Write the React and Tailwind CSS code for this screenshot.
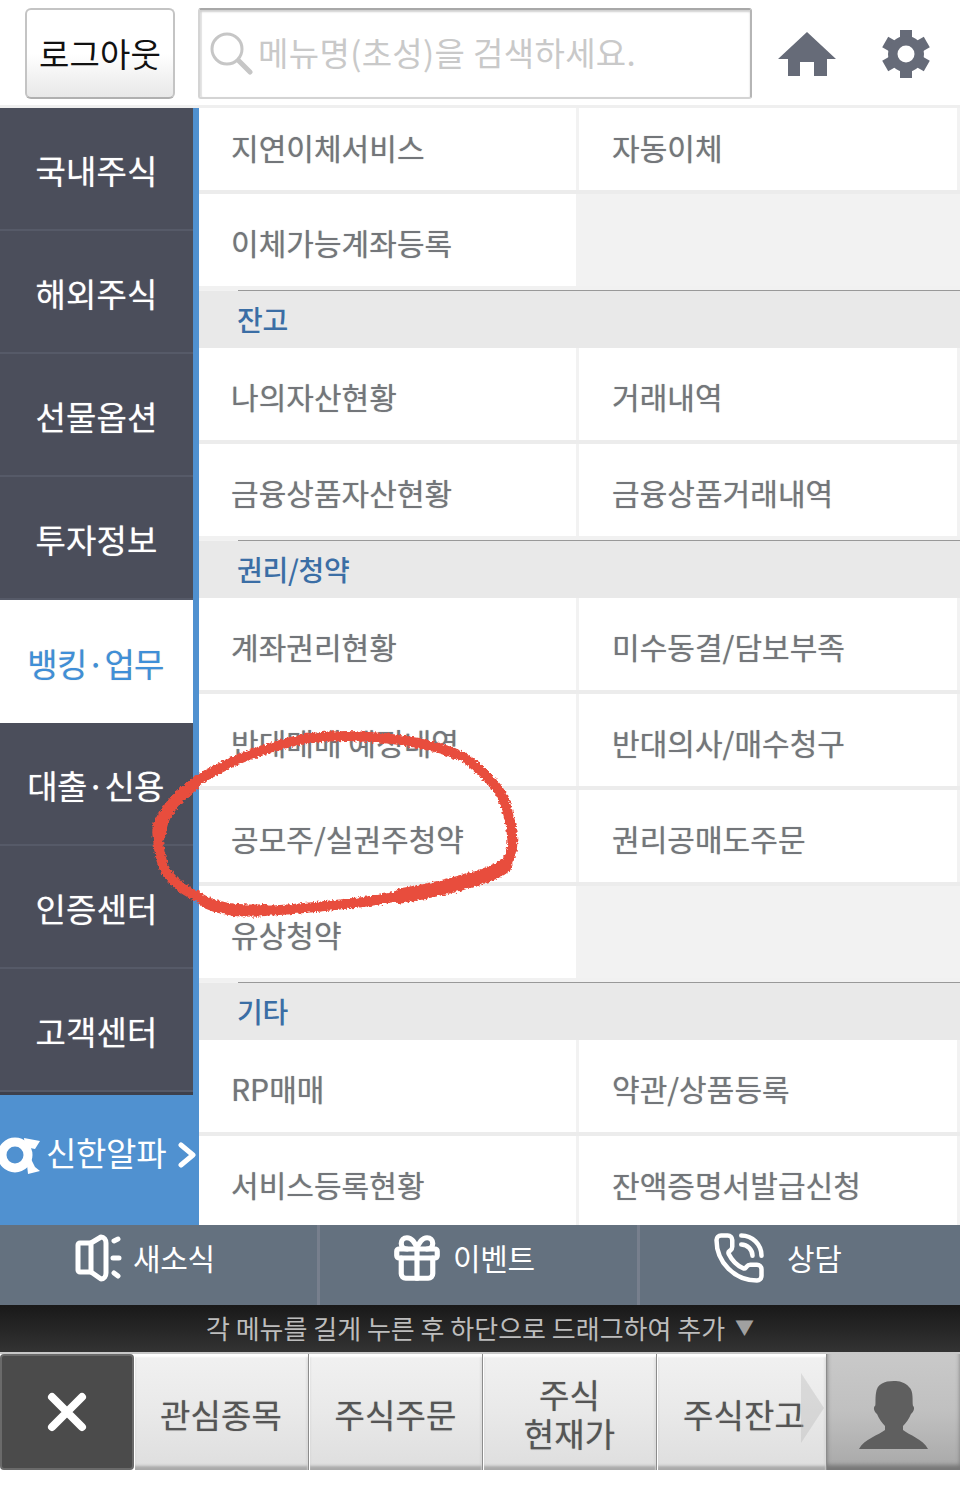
import React from "react";
import { Gift, PhoneCall } from "lucide-react";

const nav = ["국내주식", "해외주식", "선물옵션", "투자정보", "뱅킹·업무", "대출·신용", "인증센터", "고객센터"];

const blocks = [
  { a: "지연이체서비스", b: "자동이체", first: true },
  { a: "이체가능계좌등록" },
  { s: "잔고" },
  { a: "나의자산현황", b: "거래내역" },
  { a: "금융상품자산현황", b: "금융상품거래내역" },
  { s: "권리/청약" },
  { a: "계좌권리현황", b: "미수동결/담보부족" },
  { a: "반대매매 예정내역", b: "반대의사/매수청구" },
  { a: "공모주/실권주청약", b: "권리공매도주문" },
  { a: "유상청약" },
  { s: "기타" },
  { a: "RP매매", b: "약관/상품등록" },
  { a: "서비스등록현황", b: "잔액증명서발급신청" },
];

function Cell({ text, first, second }) {
  return (
    <div className={`flex items-center bg-white text-[30px] leading-[40px] tracking-[0.05px] text-[#73767a] [text-shadow:0_0_1px_#a0a0a0] whitespace-nowrap ${second ? "pl-[33px]" : "pl-[32px]"} ${first ? "h-[82px] pb-[4px]" : "h-[92px] pt-[4px]"}`}>
      {text}
    </div>
  );
}

function Block({ item }) {
  if (item.s) {
    return (
      <div className="shrink-0 flex flex-col">
        <div className="h-[4px] bg-[#f1f1f1]" />
        <div className="h-px ml-[39px] bg-[#999999]" />
        <div className="h-[57px] bg-[#e9e9e9] flex items-center pl-[38px] pb-[2px] text-[28px] leading-[36px] font-medium tracking-[-0.3px] text-[#3b6ea5]">
          {item.s}
        </div>
      </div>
    );
  }
  return (
    <div className="shrink-0 grid grid-cols-[377px_378px] gap-x-[3px] border-b-[4px] border-[#ececec] [&:has(+div.flex)]:border-b-0">
      <Cell text={item.a} first={item.first} />
      {item.b ? <Cell text={item.b} first={item.first} second /> : <div className="bg-[#f2f2f2]" />}
    </div>
  );
}

function Gear() {
  return (
    <svg width="48" height="48" viewBox="-24 -24 48 48" fill="#666b78">
      {[0, 60, 120, 180, 240, 300].map((r) => (
        <rect key={r} x="-6" y="-24" width="12" height="12" transform={`rotate(${r})`} />
      ))}
      <circle r="18" />
      <circle r="8.5" fill="#ffffff" />
    </svg>
  );
}

function Home() {
  return (
    <svg width="58" height="44" viewBox="0 0 58 44" fill="#666b78">
      <path d="M29 0L58 27H49V44H36V30H22V44H10V27H0Z" />
    </svg>
  );
}

function Speaker() {
  return (
    <svg width="47" height="48" viewBox="0 0 47 48" fill="none" stroke="#ffffff" strokeWidth="5" strokeLinecap="round" strokeLinejoin="round">
      <path d="M16 9H5a2 2 0 0 0-2 2v25a2 2 0 0 0 2 2h11" />
      <path d="M16 9L26 3c3 0 5 3 5 6v30c0 3-2 6-5 6L16 38Z" />
      <path d="M39 7l4-2M38 24h6M39 39l4 3" />
    </svg>
  );
}

function Logo() {
  return (
    <svg width="40" height="40" viewBox="0 0 40 40" className="shrink-0">
      <path d="M24 3L40 6L35 14V32L40 36L28 39Z" fill="#ffffff" />
      <path d="M25 12L35 14V32Z" fill="#5091d0" />
      <circle cx="15" cy="20" r="13" fill="none" stroke="#ffffff" strokeWidth="9" />
    </svg>
  );
}

function Person() {
  return (
    <svg width="70" height="68" viewBox="0 0 70 68" fill="#5f5f5f">
      <path d="M35 0C25 0 18 3 17 12C16 18 17 24 16 25C14 26 15 31 18 33C20 38 23 42 26 45V49C20 54 5 58 0 68H69C64 58 50 54 44 49V45C47 42 50 38 52 33C55 31 56 26 54 25C53 20 55 10 50 6C46 1 40 0 35 0Z" />
    </svg>
  );
}

function Tab({ children, w }) {
  return (
    <div className={`${w} h-full shrink-0 flex items-center justify-center pt-[4px] text-center text-[33px] leading-[39px] tracking-[0.1px] text-[#555555] [text-shadow:0_0_1px_#8a8a8a] bg-gradient-to-b from-[#f1f1f1] via-[#e9e9e9] to-[#dedede] border-r border-[#8c8c8c] shadow-[inset_0_3px_2px_#ffffff,inset_1px_0_0_#ffffff,inset_0_-4px_3px_#a9a9a9]`}>
      {children}
    </div>
  );
}

export default function App() {
  return (
    <div className="relative w-[960px] h-[1500px] overflow-hidden bg-white font-['Noto_Sans_CJK_KR','Noto_Sans',sans-serif]">
      <header className="h-[105px] flex items-start pt-[8px] pl-[25px]">
        <div className="w-[150px] h-[91px] shrink-0 flex items-center justify-center rounded-[6px] border-2 border-[#c4c4c4] border-b-[#b0b0b0] bg-gradient-to-b from-white via-white to-[#e8e8e8] text-[33px] tracking-[0.1px] text-[#111111]">
          로그아웃
        </div>
        <div className="ml-[23px] w-[554px] h-[91px] shrink-0 flex items-center pl-[9px] pb-[2px] rounded-[3px] border-2 border-[#d4d4d4] border-t-[#a8a8a8] border-r-[#b5b5b5] shadow-[inset_0_2px_2px_#d0d0d0,inset_2px_0_1px_#e4e4e4] bg-white">
          <svg width="44" height="44" viewBox="0 0 44 44" fill="none" stroke="#c6c6c6" className="shrink-0">
            <circle cx="18" cy="18" r="15" strokeWidth="3" />
            <path d="M30 30L41 41" strokeWidth="5" strokeLinecap="round" />
          </svg>
          <span className="ml-[5px] text-[33px] tracking-[0.35px] text-[#c9c9c9] whitespace-nowrap">메뉴명(초성)을 검색하세요.</span>
        </div>
        <div className="ml-[26px] mt-[24px] shrink-0"><Home /></div>
        <div className="ml-[46px] mt-[22px] shrink-0"><Gear /></div>
      </header>
      <div className="h-[3px] bg-[#efefef]" />

      <main className="h-[1117px] flex overflow-hidden">
        <aside className="w-[199px] shrink-0 flex flex-col">
          <nav className="w-[199px] border-r-[6px] border-[#5091d0] bg-[#4b4e5b]">
            {nav.map((n, i) => (
              <div
                key={n}
                className={`h-[123px] flex items-center justify-center pt-[4px] text-[33px] [text-shadow:0_0_1px_#bbbbbb] whitespace-nowrap ${n.includes("·") ? "tracking-[-0.7px] pr-[2px]" : "tracking-[0.15px]"} ${i === 4 ? "bg-white text-[#3f8fd8]" : "text-white border-b-2 border-[#565a68]"}`}
              >
                {n}
              </div>
            ))}
            <div className="h-[3px] bg-[#3d404c]" />
          </nav>
          <div className="h-[130px] bg-[#5091d0] flex items-center pb-[10px] text-white">
            <Logo />
            <span className="ml-[6px] pb-[4px] text-[33px] tracking-[-0.3px] whitespace-nowrap">신한알파</span>
            <svg width="18" height="26" viewBox="0 0 18 26" fill="none" stroke="#ffffff" strokeWidth="5" strokeLinecap="round" strokeLinejoin="round" className="ml-[12px] shrink-0">
              <path d="M3 3L15 13L3 23" />
            </svg>
          </div>
        </aside>
        <section className="flex-1 flex flex-col bg-[#f2f2f2] overflow-hidden">
          {blocks.map((b, i) => (
            <Block key={i} item={b} />
          ))}
        </section>
      </main>

      <div className="h-[80px] flex bg-[#64717f] text-white text-[30px] tracking-[-0.3px]">
        <div className="w-[320px] flex items-center pl-[75px] pb-[15px] border-r-[3px] border-[#777f8d]">
          <Speaker />
          <span className="ml-[11px]">새소식</span>
        </div>
        <div className="w-[320px] flex items-center pl-[70px] pb-[15px] border-r-[3px] border-[#777f8d]">
          <Gift size={54} strokeWidth={2.3} />
          <span className="ml-[9px]">이벤트</span>
        </div>
        <div className="w-[320px] flex items-center pl-[72px] pb-[15px]">
          <PhoneCall size={54} strokeWidth={2} />
          <span className="ml-[21px]">상담</span>
        </div>
      </div>

      <div className="h-[47px] flex items-center justify-center pb-[2px] bg-gradient-to-b from-[#191919] to-[#333333] text-[26px] text-[#bdbdbd] whitespace-nowrap">
        각 메뉴를 길게 누른 후 하단으로 드래그하여 추가
        <span className="ml-[10px] text-[19px] text-[#a0a0a0]">▼</span>
      </div>

      <div className="h-[118px] flex border-t-2 border-[#c8c8c8]">
        <div className="w-[134px] h-full shrink-0 bg-[#4b4b4b] border-2 border-[#6a6a6a] rounded-[4px] flex items-center justify-center">
          <svg width="40" height="40" viewBox="0 0 40 40" stroke="#ffffff" strokeWidth="8" strokeLinecap="round">
            <path d="M5 5L35 35M35 5L5 35" />
          </svg>
        </div>
        <Tab w="w-[175px]">관심종목</Tab>
        <Tab w="w-[174px]">주식주문</Tab>
        <Tab w="w-[174px]"><span>주식<br />현재가</span></Tab>
        <Tab w="w-[170px]"><span className="pl-[5px]">주식잔고</span></Tab>
        <div className="flex-1 h-full flex items-center justify-center pt-[6px] bg-gradient-to-b from-[#c9c9c9] via-[#c0c0c0] to-[#a8a8a8] shadow-[inset_0_-5px_4px_#777777]">
          <Person />
        </div>
      </div>

      <svg className="absolute left-[801px] top-[1373px]" width="24" height="70" viewBox="0 0 24 70" fill="#b5b5b5" fillOpacity="0.35">
        <path d="M0 0L23 35L0 70Z" />
      </svg>

      <svg className="absolute left-0 top-0 pointer-events-none" width="960" height="1500" viewBox="0 0 960 1500" fill="none">
        <defs>
          <filter id="rough" x="-10%" y="-10%" width="120%" height="120%">
            <feTurbulence type="fractalNoise" baseFrequency="0.4" numOctaves="2" seed="4" />
            <feDisplacementMap in="SourceGraphic" scale="5" xChannelSelector="R" yChannelSelector="G" />
          </filter>
        </defs>
        <g filter="url(#rough)" stroke="#e84e3e" strokeLinecap="round" strokeLinejoin="round">
          <path strokeWidth="10" d="M463 757C440 746 400 737 347 736C320 736 298 739 280 745C262 750 245 756 230 763C212 772 200 778 193 784C178 795 170 804 164 814C158 823 156 829 158 839C159 852 161 862 166 872C176 885 186 891 198 897C210 904 220 908 232 911C250 912 265 911 280 910C310 908 335 905 363 902C390 898 410 894 430 891C450 887 465 883 480 878C495 872 503 869 508 861C512 851 513 846 512 835C511 822 509 815 505 803C500 790 495 785 490 780C480 770 472 762 463 757" />
          <path strokeWidth="15" d="M400 896C430 891 455 885 478 878C490 874 498 871 504 866" />
          <path strokeWidth="12" d="M205 902C220 909 240 912 265 910" />
          <path strokeWidth="12" d="M160 835C160 815 175 800 193 785" />
        </g>
      </svg>
    </div>
  );
}
